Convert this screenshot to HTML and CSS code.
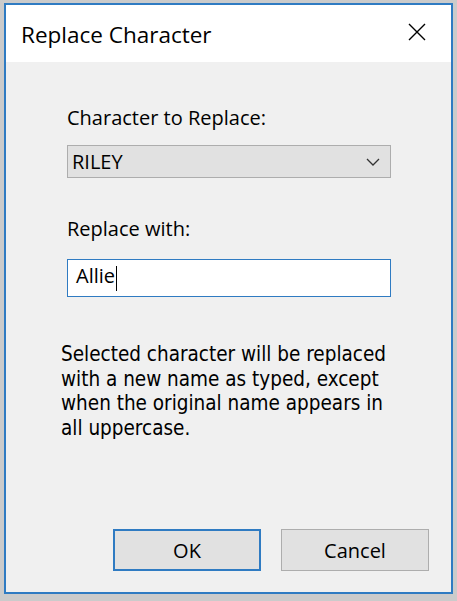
FILE: index.html
```html
<!DOCTYPE html>
<html>
<head>
<meta charset="utf-8">
<link rel="stylesheet" href="styles.css">
</head>
<body>
<div class="window">
  <div class="titlebar">
    <span class="title">Replace Character</span>
    <svg class="close" width="18" height="18" viewBox="0 0 18 18"><path d="M1 1 L17 17 M17 1 L1 17" stroke="#000" stroke-width="1.4" fill="none"/></svg>
  </div>
  <div class="content">
    <div class="field">
      <div class="label">Character to Replace:</div>
      <div class="combo">
        <span class="value">RILEY</span>
        <svg class="chev" width="14" height="8" viewBox="0 0 14 8"><path d="M1 1 L7 7 L13 1" stroke="#333" stroke-width="1.3" fill="none"/></svg>
      </div>
    </div>
    <div class="field second">
      <div class="label">Replace with:</div>
      <div class="input"><span class="value">Allie</span><span class="caret"></span></div>
    </div>
    <p class="note">Selected character will be replaced with a new name as typed, except when the original name appears in all uppercase.</p>
    <div class="buttons">
      <div class="btn primary">OK</div>
      <div class="btn">Cancel</div>
    </div>
  </div>
</div>
</body>
</html>
```
FILE: styles.css
```css
html, body {
  margin: 0;
  padding: 0;
}
body {
  width: 457px;
  height: 601px;
  background: #cbcbcb;
  padding: 3px 4px 7px 4px;
  box-sizing: border-box;
  font-family: "Open Sans", "Noto Sans", sans-serif;
  color: #000;
}
.window {
  width: 449px;
  height: 591px;
  box-sizing: border-box;
  border: 2px solid #2f7bc2;
  background: #f0f0f0;
  display: flex;
  flex-direction: column;
}
.titlebar {
  height: 57px;
  background: #fff;
  display: flex;
  align-items: center;
  justify-content: space-between;
  padding: 0 25px 0 15px;
  flex: none;
}
.title {
  font-size: 22.5px;
  margin-top: 2px;
}
.close {
  display: block;
  margin-top: -4px;
}
.content {
  flex: 1;
  display: flex;
  flex-direction: column;
  padding: 43px 0 0 61px;
}
.label {
  font-size: 20px;
  line-height: 26px;
  height: 26px;
}
.combo {
  margin-top: 14px;
  width: 324px;
  height: 33px;
  box-sizing: border-box;
  border: 1px solid #adadad;
  background: #e1e1e1;
  display: flex;
  align-items: center;
  justify-content: space-between;
  padding: 0 10px 0 4px;
}
.value {
  font-size: 20px;
}
.second {
  margin-top: 38px;
}
.input {
  margin-top: 17px;
  width: 324px;
  height: 38px;
  box-sizing: border-box;
  border: 1px solid #2f7bc2;
  background: #fff;
  display: flex;
  align-items: center;
  padding: 0 0 5px 8px;
}
.caret {
  width: 1px;
  height: 25px;
  background: #000;
  margin: 5px 0 0 1px;
}
.note {
  margin: 45px 0 0 -6px;
  width: 336px;
  font-family: "DejaVu Sans Condensed", "DejaVu Sans", sans-serif;
  font-size: 20.5px;
  line-height: 24.5px;
}
.buttons {
  margin-top: auto;
  margin-bottom: 21px;
  margin-left: 46px;
  display: flex;
  gap: 20px;
}
.btn {
  width: 148px;
  height: 42px;
  box-sizing: border-box;
  border: 1px solid #adadad;
  background: #e1e1e1;
  display: flex;
  align-items: center;
  justify-content: center;
  font-size: 20px;
}
.btn.primary {
  border: 2px solid #2f7bc2;
}
```
